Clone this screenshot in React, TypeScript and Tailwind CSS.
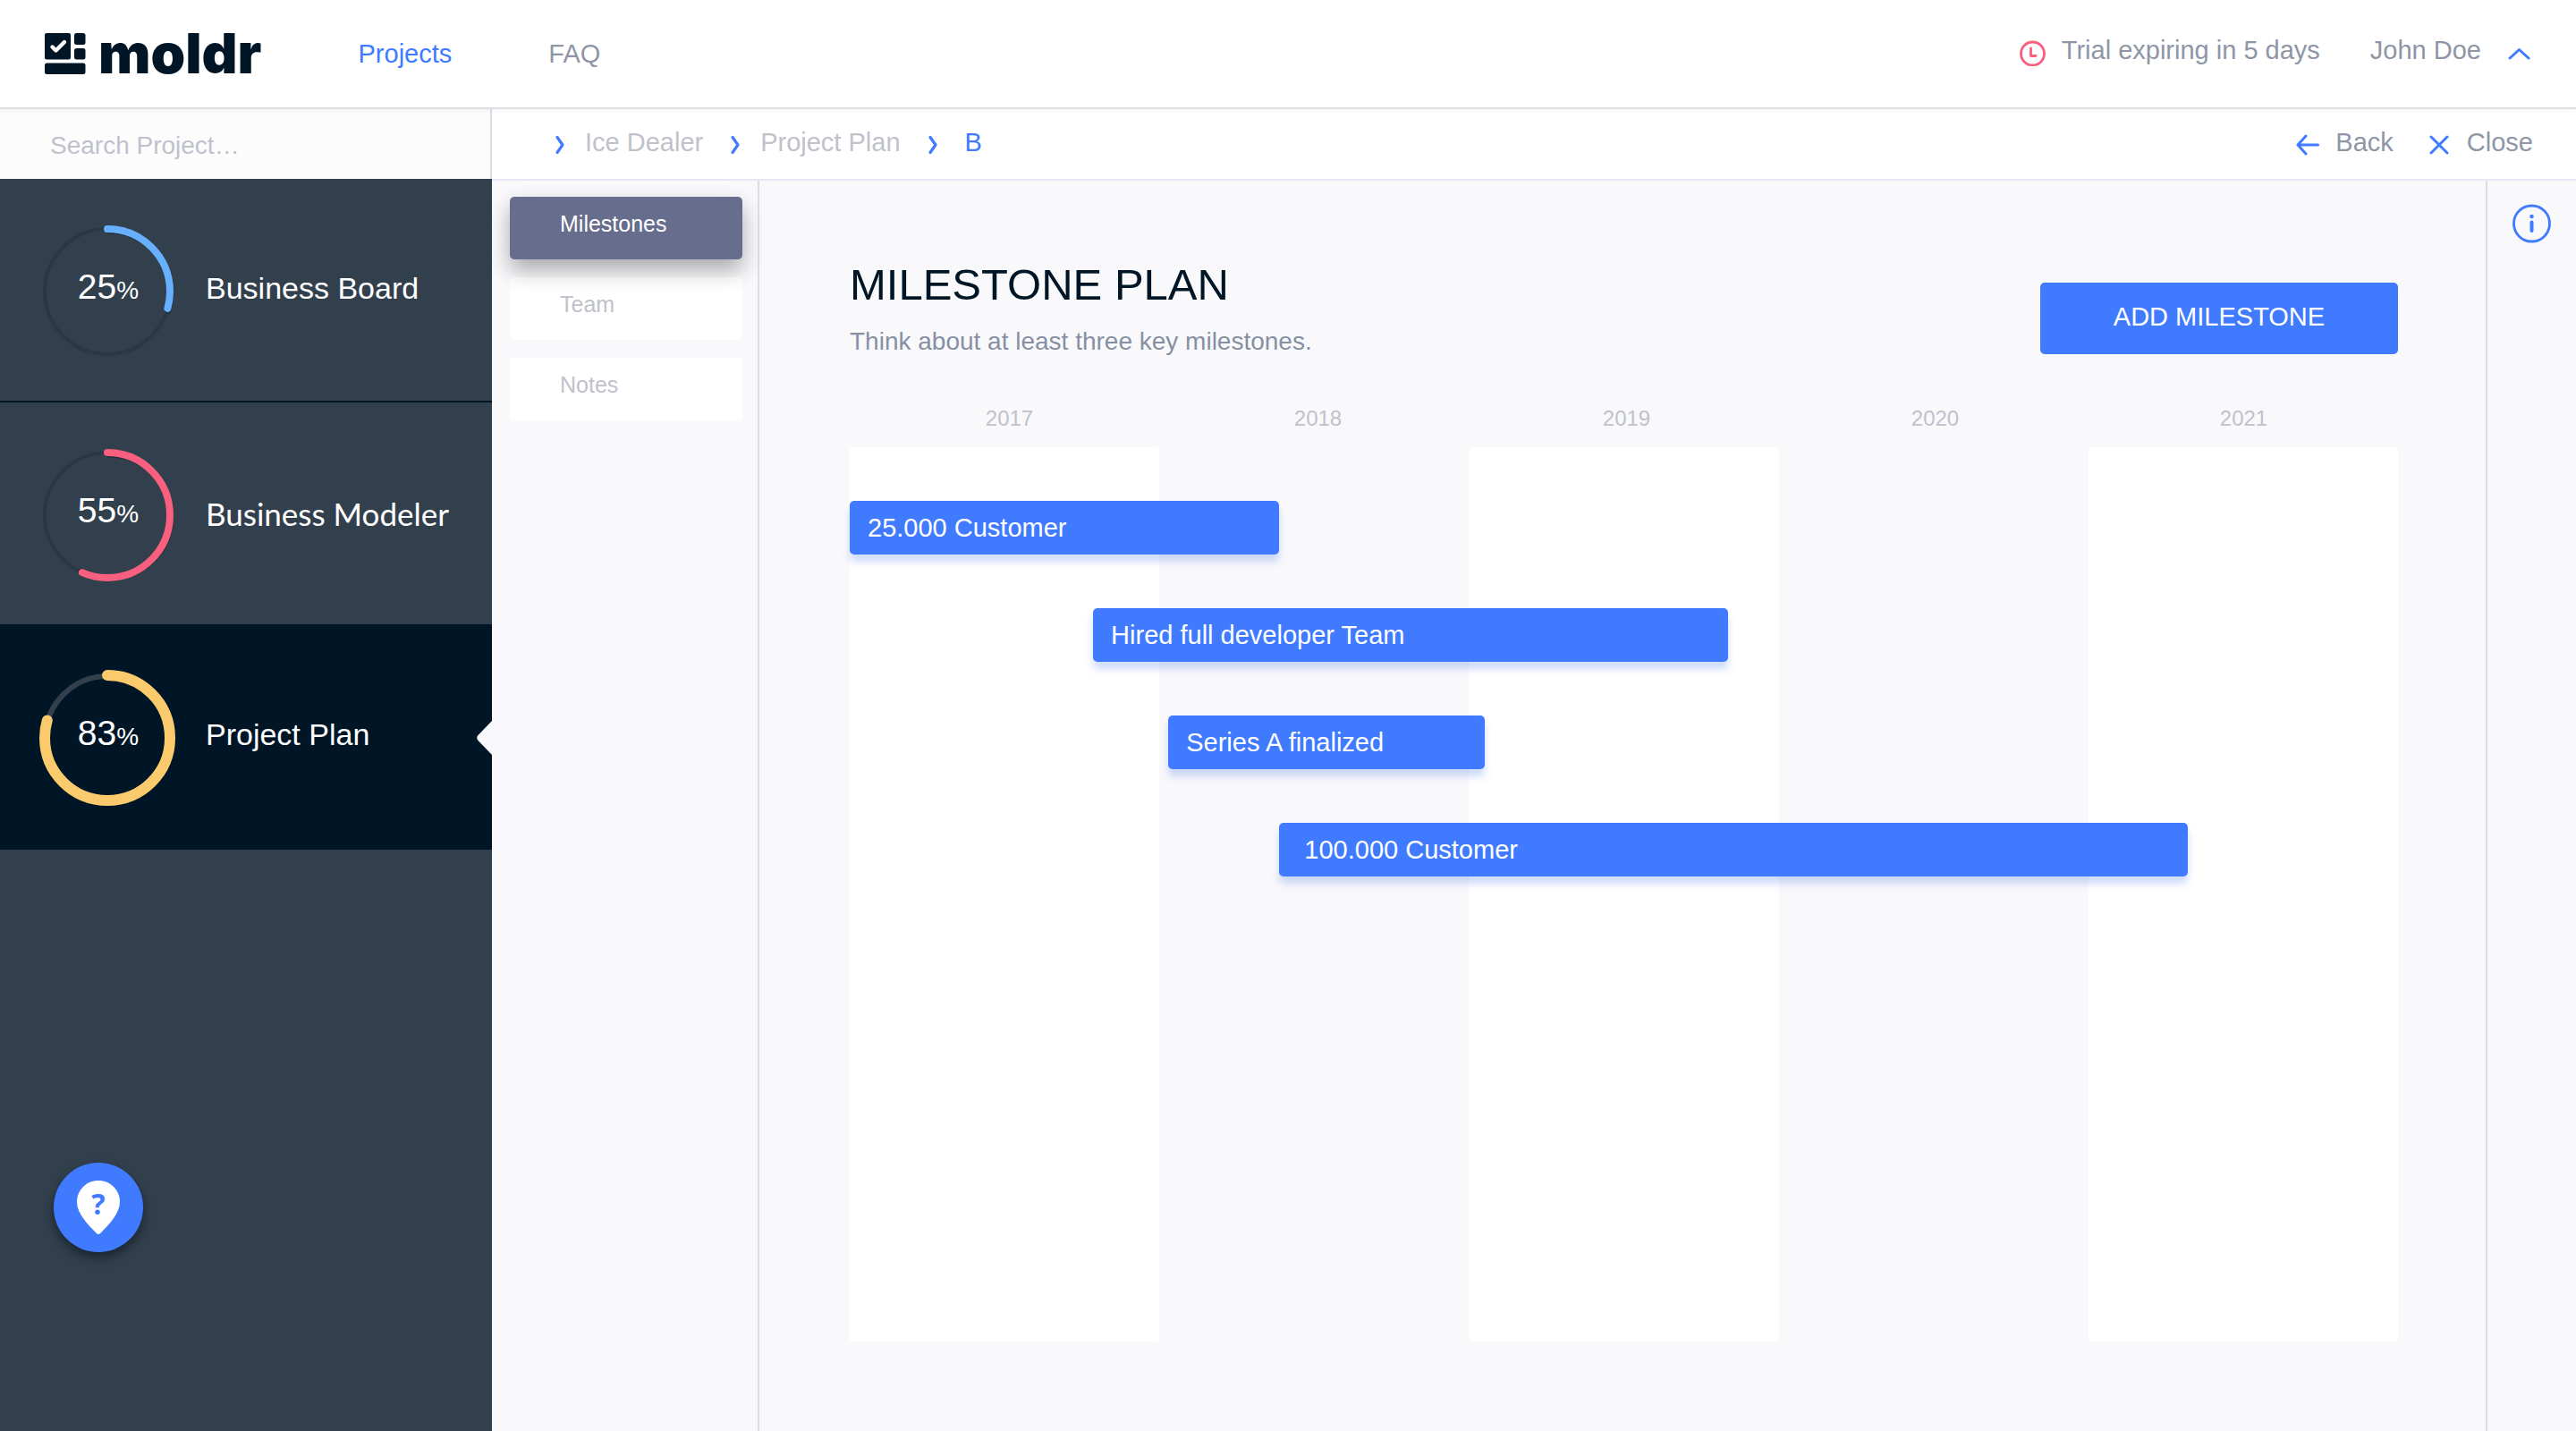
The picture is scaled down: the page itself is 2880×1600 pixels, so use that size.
import React from "react";

type Project = {
  name: string;
  percent: number;
  arc: number;
  color: string;
  active?: boolean;
  humanist?: boolean;
};

const projects: Project[] = [
  { name: "Business Board", percent: 25, arc: 0.293, color: "#66b0ff" },
  { name: "Business Modeler", percent: 55, arc: 0.565, color: "#f95f7f", humanist: true },
  { name: "Project Plan", percent: 83, arc: 0.794, color: "#fbca6c", active: true },
];

const years = ["2017", "2018", "2019", "2020", "2021"];

const milestones = [
  { name: "25.000 Customer", start: 0, length: 27.75 },
  { name: "Hired full developer Team", start: 15.72, length: 41.0 },
  { name: "Series A finalized", start: 20.58, length: 20.46 },
  { name: "100.000 Customer", start: 27.75, length: 58.7, indent: true },
];

const crumbs = ["Ice Dealer", "Project Plan", "B"];

function Logo() {
  return (
    <a href="#" aria-label="moldr" className="flex items-center gap-[14px] text-[#001626]">
      <svg width="46" height="46" viewBox="0 0 46 46" fill="currentColor" aria-hidden="true">
        <rect x="0" y="0" width="29" height="29.500" rx="2" />
        <path d="M8.500 15.500l4 4L22 10" fill="none" stroke="#fff" strokeWidth="4.400" strokeLinecap="round" strokeLinejoin="round" />
        <rect x="33" y="0" width="12.500" height="13" rx="2.500" />
        <rect x="33" y="17" width="12.500" height="12.500" rx="2.500" />
        <rect x="0" y="33.500" width="45.500" height="12.500" rx="2.500" />
      </svg>
      <span className="font-['Inter',sans-serif] text-[62px] leading-[60px] font-black">moldr</span>
    </a>
  );
}

function Ring({ arc, color, active }: Project) {
  const c = 2 * Math.PI * 70;
  return (
    <svg width="160" height="160" viewBox="0 0 160 160" fill="none" className="col-start-1 row-start-1" aria-hidden="true">
      <circle cx="80" cy="80" r={active ? 69 : 70} stroke={active ? "#32404d" : "#2a3845"} strokeWidth={active ? 6 : 4} />
      {!active && (
        <circle
          cx="79"
          cy="82"
          r="69"
          stroke="#22303c"
          strokeWidth="7"
          strokeLinecap="round"
          strokeDasharray={`${c * arc} ${c}`}
          transform="rotate(-90 80 80)"
        />
      )}
      <circle
        cx="80"
        cy="80"
        r="70"
        stroke={color}
        strokeWidth={active ? 12 : 8}
        strokeLinecap="round"
        strokeDasharray={`${c * arc} ${c}`}
        transform="rotate(-90 80 80)"
      />
    </svg>
  );
}

function ProjectItem(p: Project) {
  return (
    <li>
      <a
        href="#"
        aria-current={p.active ? "page" : undefined}
        className={
          p.active
            ? "flex h-[250px] items-center bg-[#001626] pl-10 text-white"
            : "flex h-[250px] items-center border-b-2 border-[#001626] pt-1 pl-10 text-white"
        }
      >
        <span className="grid shrink-0 place-items-center">
          <Ring {...p} />
          <span className="col-start-1 row-start-1 pb-1.5 pl-0.5 text-[39px] leading-10">
            {p.percent}
            <span className="text-[28px]">%</span>
          </span>
        </span>
        <span
          className={
            p.humanist
              ? "grow pb-1 pl-[30px] font-['Lato',sans-serif] text-[35px] leading-10"
              : "grow pb-2 pl-[30px] text-[34px] leading-10"
          }
        >
          {p.name}
        </span>
        {p.active && (
          <svg width="17" height="38" viewBox="0 0 17 38" fill="#f9f9fc" aria-hidden="true">
            <path d="M17 0V38L1.500 22Q-1 19 1.500 16Z" />
          </svg>
        )}
      </a>
    </li>
  );
}

function CrumbChevron() {
  return (
    <svg width="12" height="22" viewBox="0 0 12 22" fill="none" className="mt-0.5" aria-hidden="true">
      <path d="M3 2.500L9 11L3 19.500" stroke="#407bff" strokeWidth="3.200" strokeLinecap="round" strokeLinejoin="round" />
    </svg>
  );
}

export default function App() {
  return (
    <div className="flex min-h-screen flex-col bg-[#f9f9fc] font-['Liberation_Sans',Arial,sans-serif] text-[29px] leading-8 text-[#8e96a6]">
      <header className="relative z-10 flex h-[122px] items-center border-b-2 border-[#dcdee3] bg-white pr-[50px] pl-[50px] shadow-[0_2px_4px_rgba(0,0,0,0.04)]">
        <Logo />
        <nav className="flex gap-[108px] pl-[108px]">
          <a href="#" aria-current="page" className="text-[#407bff]">
            Projects
          </a>
          <a href="#">FAQ</a>
        </nav>
        <div className="ml-auto flex items-center pb-1">
          <svg width="32" height="32" viewBox="0 0 32 32" fill="none" stroke="#f95f7f" strokeWidth="2.800" strokeLinecap="round" strokeLinejoin="round" aria-hidden="true">
            <circle cx="15.500" cy="18" r="13" />
            <path d="M13.500 12V20.500H19" />
          </svg>
          <span className="pb-1 pl-4">Trial expiring in 5 days</span>
          <button type="button" className="flex items-center gap-[30px] pb-1 pl-[56px]">
            John Doe
            <svg width="26" height="14" viewBox="0 0 26 14" fill="none" className="mt-2" aria-hidden="true">
              <path d="M2 12L12.500 2.500L23 12" stroke="#407bff" strokeWidth="3" strokeLinecap="round" strokeLinejoin="round" />
            </svg>
          </button>
        </div>
      </header>

      <div className="flex grow">
        <aside className="flex w-[550px] shrink-0 flex-col bg-[#32404d]">
          <input
            type="search"
            aria-label="Search Project"
            placeholder="Search Project…"
            className="h-[78px] w-full border-r-2 border-[#dcdee3] bg-[#fcfcfd] pt-1 pl-14 text-[28px] outline-none placeholder:text-[#bfc2cb]"
          />
          <ul>
            {projects.map((p) => (
              <ProjectItem key={p.name} {...p} />
            ))}
          </ul>
          <button
            type="button"
            aria-label="Help"
            className="mt-auto mb-[200px] ml-[60px] grid size-[100px] place-items-center rounded-full bg-[#407bff] shadow-[0_6px_12px_rgba(0,10,20,0.5)]"
          >
            <svg width="48" height="60" viewBox="0 0 48 60" fill="#fff" className="col-start-1 row-start-1" aria-hidden="true">
              <path d="M24 0C37.500 0 48 10.500 48 24C48 36.500 36 49 25.800 59.200Q24 60.800 22.200 59.200C12 49 0 36.500 0 24C0 10.500 10.500 0 24 0Z" />
            </svg>
            <span className="col-start-1 row-start-1 pb-2 font-['Noto_Sans',sans-serif] text-[32px] leading-8 font-bold text-[#407bff]">?</span>
          </button>
        </aside>

        <div className="flex grow flex-col">
          <div className="flex h-20 items-center border-b-2 border-[#e4e8f5] bg-white pr-12 pl-[70px]">
            <nav aria-label="Breadcrumb" className="flex gap-[30px]">
              {crumbs.map((c, i) => (
                <span key={c} className="flex items-center gap-[22px]">
                  <CrumbChevron />
                  <a href="#" className={i === crumbs.length - 1 ? "pb-1 pl-2 text-[#407bff]" : "pb-1 text-[#bfc2cb]"}>
                    {c}
                  </a>
                </span>
              ))}
            </nav>
            <div className="ml-auto flex gap-10">
              <button type="button" className="flex items-center gap-[18px]">
                <svg width="26" height="24" viewBox="0 0 26 24" fill="none" stroke="#407bff" strokeWidth="3" strokeLinecap="round" strokeLinejoin="round" className="mt-0.5" aria-hidden="true">
                  <path d="M24.500 12H2M11 2L2 12L11 22" />
                </svg>
                <span className="pb-1">Back</span>
              </button>
              <button type="button" className="flex items-center gap-5">
                <svg width="22" height="22" viewBox="0 0 22 22" fill="none" stroke="#407bff" strokeWidth="3" strokeLinecap="round" className="mt-0.5" aria-hidden="true">
                  <path d="M2 2L20 20M20 2L2 20" />
                </svg>
                <span className="pb-1">Close</span>
              </button>
            </div>
          </div>

          <div className="flex grow">
            <nav aria-label="Sections" className="flex w-[299px] shrink-0 flex-col gap-5 border-r-2 border-[#dcdee3] pt-[18px] pr-[17px] pl-5 text-[25px] leading-8">
              <button type="button" aria-current="page" className="relative z-10 h-[70px] rounded-[5px] bg-[#676d8c] pb-[10px] pl-14 text-left text-white shadow-[0_12px_24px_rgba(0,0,0,0.32)]">
                Milestones
              </button>
              <button type="button" className="h-[70px] rounded-[5px] bg-white pb-[10px] pl-14 text-left text-[#bfc2cb]">
                Team
              </button>
              <button type="button" className="h-[70px] rounded-[5px] bg-white pb-[10px] pl-14 text-left text-[#bfc2cb]">
                Notes
              </button>
            </nav>

            <main className="grow pt-[88px] pr-[98px] pb-[100px] pl-[101px]">
              <div className="flex items-start justify-between">
                <div>
                  <h1 className="text-[49px] leading-[56px] text-[#001626]">MILESTONE PLAN</h1>
                  <p className="mt-5 text-[28px] text-[#8690a3]">Think about at least three key milestones.</p>
                </div>
                <button type="button" className="mt-[26px] h-20 w-[400px] rounded-[5px] bg-[#407bff] pb-1 text-white">
                  ADD MILESTONE
                </button>
              </div>

              <div className="mt-[54px] grid grid-cols-5 pl-1.5 text-center text-2xl leading-8 text-[#bfc2cb]">
                {years.map((y) => (
                  <span key={y}>{y}</span>
                ))}
              </div>
              <div className="mt-4 grid">
                <div className="col-start-1 row-start-1 grid h-[1000px] grid-cols-5">
                  {years.map((y, i) => (
                    <div key={y} className={i % 2 === 0 ? "rounded-sm bg-white" : ""} />
                  ))}
                </div>
                <ul className="col-start-1 row-start-1 flex flex-col gap-[60px] pt-[60px] text-white">
                  {milestones.map((m) => (
                    <li
                      key={m.name}
                      style={{ marginLeft: `${m.start}%`, width: `${m.length}%` }}
                      className={
                        m.indent
                          ? "flex h-[60px] items-center rounded-[5px] bg-[#407bff] pl-7 shadow-[0_8px_8px_rgba(64,110,230,0.25)]"
                          : "flex h-[60px] items-center rounded-[5px] bg-[#407bff] pl-5 shadow-[0_8px_8px_rgba(64,110,230,0.25)]"
                      }
                    >
                      {m.name}
                    </li>
                  ))}
                </ul>
              </div>
            </main>

            <div className="w-[101px] shrink-0 border-l-2 border-[#dcdee3] pt-[26px]">
              <button type="button" aria-label="Information" className="mx-auto block size-11">
                <svg width="44" height="44" viewBox="0 0 44 44" fill="none" stroke="#407bff" strokeLinecap="round" aria-hidden="true">
                  <circle cx="21.500" cy="22" r="20" strokeWidth="2.800" />
                  <path d="M21.500 20.500V30" strokeWidth="4" />
                  <circle cx="21.500" cy="14" r="2.300" fill="#407bff" stroke="none" />
                </svg>
              </button>
            </div>
          </div>
        </div>
      </div>
    </div>
  );
}
